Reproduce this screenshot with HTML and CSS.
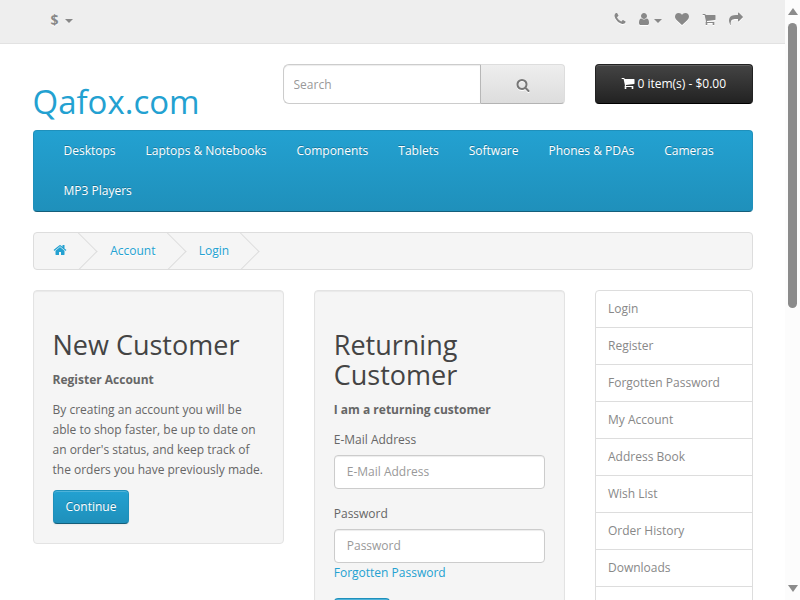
FILE: index.html
```html
<!DOCTYPE html>
<html lang="en">
<head>
<meta charset="utf-8">
<title>Account Login</title>
<link rel="stylesheet" href="styles.css">
</head>
<body>
<svg class="defs" width="0" height="0">
  <symbol id="phone" viewBox="0 0 1792 1792"><path d="M1600 1240q0 27-10 70.5t-21 68.5q-21 50-122 106-94 51-186 51-27 0-53-3.500t-57.500-12.500-47-14.500-55.500-20.500-49-18q-98-35-175-83-127-79-264-216t-216-264q-48-77-83-175-3-9-18-49t-20.500-55.500-14.500-47-12.500-57.500-3.500-53q0-92 51-186 56-101 106-122 25-11 68.500-21t70.500-10q14 0 21 3 18 6 53 76 11 19 30 54t35 63.500 31 53.500q3 4 17.500 25t21.500 35.500 7 28.500q0 20-28.500 50t-62 55-62 53-28.500 46q0 9 5 22.500t8.500 20.500 14 24 11.500 19q76 137 174 235t235 174q2 1 19 11.500t24 14 20.500 8.500 22.500 5q18 0 46-28.500t53-62 55-62 50-28.500q14 0 28.500 7t35.500 21.500 25 17.500q25 15 53.500 31t63.500 35 54 30q70 35 76 53 3 7 3 21z"/></symbol>
  <symbol id="user" viewBox="0 0 1792 1792"><path d="M1536 1399q0 109-62.500 187t-150.500 78h-854q-88 0-150.500-78t-62.500-187q0-85 8.500-160.500t31.500-152 58.500-131 94-89 134.500-34.500q131 128 313 128t313-128q76 0 134.500 34.500t94 89 58.500 131 31.500 152 8.500 160.500zm-256-887q0 159-112.500 271.500t-271.500 112.500-271.500-112.500-112.500-271.500 112.500-271.500 271.500-112.500 271.500 112.500 112.500 271.500z"/></symbol>
  <symbol id="heart" viewBox="0 0 1792 1792"><path d="M896 1664q-26 0-44-18l-624-602q-10-8-27.500-26t-55.500-65.500-68-97.500-53.500-121-23.500-138q0-220 127-344t351-124q62 0 126.500 21.500t120 58 95.500 68.500 76 68q36-36 76-68t95.500-68.500 120-58 126.500-21.500q224 0 351 124t127 344q0 221-229 450l-623 600q-18 18-44 18z"/></symbol>
  <symbol id="cart" viewBox="0 0 1792 1792"><path d="M704 1536q0 52-38 90t-90 38-90-38-38-90 38-90 90-38 90 38 38 90zm896 0q0 52-38 90t-90 38-90-38-38-90 38-90 90-38 90 38 38 90zm128-1088v512q0 24-16.500 42.500t-40.500 21.500l-1044 122q13 60 13 70 0 16-24 64h920q26 0 45 19t19 45-19 45-45 19h-1024q-26 0-45-19t-19-45q0-11 8-31.500t16-36 21.500-40 15.500-29.500l-177-823h-204q-26 0-45-19t-19-45 19-45 45-19h256q16 0 28.500 6.500t19.500 15.500 13 24.500 8 26 5.500 29.500 4.500 26h1201q26 0 45 19t19 45z"/></symbol>
  <symbol id="share" viewBox="0 0 1792 1792"><path d="M1792 640q0 26-19 45l-512 512q-19 19-45 19t-45-19-19-45v-256h-224q-98 0-175.500 6t-154 21.500-133 42.500-105.500 69.500-80 101-48.500 138.500-17.500 181q0 55 5 123 0 6 2.500 23.500t2.500 26.500q0 15-8.500 25t-23.500 10q-16 0-28-17-7-9-13-22t-13.500-30-10.500-24q-127-285-127-451 0-199 53-333 162-403 875-403h224v-256q0-26 19-45t45-19 45 19l512 512q19 19 19 45z"/></symbol>
  <symbol id="search" viewBox="0 0 1792 1792"><path d="M1216 832q0-185-131.500-316.500t-316.500-131.500-316.500 131.500-131.500 316.500 131.500 316.500 316.500 131.500 316.500-131.500 131.500-316.500zm512 832q0 52-38 90t-90 38q-54 0-90-38l-343-342q-179 124-399 124-143 0-273.500-55.500t-225-150-150-225-55.500-273.500 55.500-273.500 150-225 225-150 273.500-55.500 273.500 55.500 225 150 150 225 55.500 273.500q0 220-124 399l343 343q37 37 37 90z"/></symbol>
  <symbol id="home" viewBox="0 0 1792 1792"><path d="M1472 992v480q0 26-19 45t-45 19h-384v-384h-256v384h-384q-26 0-45-19t-19-45v-480q0-1 .5-3t.5-3l575-474 575 474q1 2 1 6zm223-69l-62 74q-8 9-21 11h-3q-13 0-21-7l-692-577-692 577q-12 8-24 7-13-2-21-11l-62-74q-8-10-7-23.500t11-21.500l719-599q32-26 76-26t76 26l244 204v-195q0-14 9-23t23-9h192q14 0 23 9t9 23v408l219 182q10 8 11 21.500t-7 23.500z"/></symbol>
</svg>
<div class="page">
  <nav class="top">
    <div class="container top-row">
      <div class="currency"><strong>$</strong><span class="caret"></span></div>
      <div class="top-links">
        <svg class="icon"><use href="#phone"/></svg>
        <span class="account"><svg class="icon"><use href="#user"/></svg><span class="caret"></span></span>
        <svg class="icon"><use href="#heart"/></svg>
        <svg class="icon"><use href="#cart"/></svg>
        <svg class="icon"><use href="#share"/></svg>
      </div>
    </div>
  </nav>
  <header class="container header">
    <h1 class="logo">Qafox.com</h1>
    <div class="search">
      <input type="text" placeholder="Search">
      <button type="button"><svg class="icon"><use href="#search"/></svg></button>
    </div>
    <button class="cart" type="button"><svg class="icon"><use href="#cart"/></svg><span>0 item(s) - $0.00</span></button>
  </header>
  <div class="container">
    <nav class="menu">
      <a>Desktops</a><a>Laptops &amp; Notebooks</a><a>Components</a><a>Tablets</a><a>Software</a><a>Phones &amp; PDAs</a><a>Cameras</a><a>MP3 Players</a>
    </nav>
    <ul class="breadcrumb">
      <li><svg class="icon"><use href="#home"/></svg></li>
      <li>Account</li>
      <li>Login</li>
    </ul>
    <div class="columns">
      <section class="well">
        <h2>New Customer</h2>
        <p><strong>Register Account</strong></p>
        <p>By creating an account you will be able to shop faster, be up to date on an order's status, and keep track of the orders you have previously made.</p>
        <button class="btn" type="button">Continue</button>
      </section>
      <section class="well">
        <h2>Returning Customer</h2>
        <p><strong>I am a returning customer</strong></p>
        <div class="group">
          <label for="email">E-Mail Address</label>
          <input id="email" type="text" placeholder="E-Mail Address">
        </div>
        <div class="group">
          <label for="password">Password</label>
          <input id="password" type="password" placeholder="Password">
          <a class="forgot">Forgotten Password</a>
        </div>
        <button class="btn submit" type="button"></button>
      </section>
      <aside class="list">
        <a>Login</a><a>Register</a><a>Forgotten Password</a><a>My Account</a><a>Address Book</a><a>Wish List</a><a>Order History</a><a>Downloads</a><a class="blank"></a>
      </aside>
    </div>
  </div>
</div>
<div class="scrollbar">
  <span class="arrow up"></span>
  <span class="thumb"></span>
  <span class="arrow down"></span>
</div>
</body>
</html>
```
FILE: styles.css
```css
* { box-sizing: border-box; }
body {
  margin: 0;
  height: 600px;
  display: flex;
  overflow: hidden;
  background: #fff;
  color: #666;
  font: 400 12px/20px "Open Sans", sans-serif;
}
input, button { font: inherit; }
.defs { position: absolute; }
.page { width: 785px; height: 600px; overflow: hidden; }
.container { width: 750px; margin: 0 auto; padding: 0 15px; }
.icon { display: block; flex: none; width: 14px; height: 14px; fill: currentColor; overflow: visible; }
.caret {
  display: inline-block;
  border-top: 4px solid;
  border-left: 4px solid transparent;
  border-right: 4px solid transparent;
}

.top { height: 44px; margin-bottom: 20px; background: #eee; border-bottom: 1px solid #e2e2e2; color: #888; }
.top-row { display: flex; justify-content: space-between; align-items: center; height: 40px; }
.currency { display: flex; align-items: center; gap: 6px; padding-left: 18px; font-size: 14px; text-shadow: 0 1px 0 #fff; }
.currency .caret { margin-top: 2px; }
.top-links { display: flex; align-items: center; gap: 13px; padding-right: 9.5px; margin-top: -2px; }
.top-links .icon { filter: drop-shadow(0 1px 0 #fff); }
.account { display: flex; align-items: center; gap: 3px; margin-left: -3px; }
.account .caret { margin-top: 4px; }

.header { display: flex; height: 66px; }
.logo { width: 250px; margin: 20px 0 0; color: #23a1d1; font-size: 33px; font-weight: 400; line-height: 36px; }
.search { display: flex; width: 282.5px; height: 40px; margin-right: 30px; }
.search input {
  flex: 1;
  min-width: 0;
  padding: 2px 10px 0;
  border: 1px solid #ccc;
  border-right: 0;
  border-radius: 6px 0 0 6px;
  box-shadow: inset 0 1px 1px rgba(0, 0, 0, .075);
}
::placeholder { color: #999; opacity: 1; }
.search button {
  display: flex;
  align-items: center;
  justify-content: center;
  width: 85px;
  padding: 2px 0 0;
  color: #777;
  background: linear-gradient(#eee, #ddd);
  border: 1px solid #ddd;
  border-color: #ddd #ddd #b3b3b3 #b7b7b7;
  border-radius: 0 4px 4px 0;
}
.search .icon { filter: drop-shadow(0 1px 0 #fff); }
.cart {
  display: flex;
  align-items: center;
  justify-content: center;
  gap: 2px;
  width: 157.5px;
  height: 40px;
  padding: 0;
  color: #fff;
  background: linear-gradient(#444, #222);
  border: 1px solid #111;
  border-color: #222 #222 #000;
  border-radius: 4px;
  box-shadow: inset 0 1px 0 rgba(255, 255, 255, .15);
}
.cart .icon { margin-top: -2px; }

.menu {
  display: flex;
  flex-wrap: wrap;
  height: 82px;
  margin-bottom: 20px;
  padding: 0 15px;
  background: linear-gradient(#23a1d1, #1f90bb);
  border: 1px solid #1f90bb;
  border-bottom-color: #145e7a;
  border-radius: 4px;
}
.menu a { height: 40px; padding: 10px 15px; color: #fff; text-shadow: 0 -1px 0 rgba(0, 0, 0, .25); }

.breadcrumb {
  display: flex;
  gap: 3.2px;
  height: 38px;
  margin: 0 0 20px;
  padding: 8px 0;
  overflow: hidden;
  list-style: none;
  color: #23a1d1;
  background: #f5f5f5;
  border: 1px solid #ddd;
  border-radius: 4px;
}
.breadcrumb li { position: relative; padding: 0 20px; text-shadow: 0 1px 0 #fff; }
.breadcrumb .icon { margin: 1.5px 0 0 -.5px; }
.breadcrumb li::after {
  content: "";
  position: absolute;
  top: -3px;
  right: -5px;
  width: 26px;
  height: 26px;
  border-top: 1px solid #ddd;
  border-right: 1px solid #ddd;
  transform: rotate(45deg);
}

.columns { display: grid; grid-template-columns: 251.25px 251.25px 157.5px; gap: 30px; align-items: start; }
.well { padding: 19px; background: #f5f5f5; border: 1px solid #e3e3e3; border-radius: 4px; box-shadow: inset 0 1px 1px rgba(0, 0, 0, .05); }
h2 { margin: 20px 0 10px; color: #444; font-size: 27px; font-weight: 400; line-height: 30px; }
p { margin: 0 0 10px; }
.btn {
  display: block;
  height: 34px;
  padding: 0 12px;
  color: #fff;
  background: linear-gradient(#23a1d1, #1f90bb);
  border: 1px solid #1f90bb;
  border-bottom-color: #145e7a;
  border-radius: 4px;
  box-shadow: inset 0 1px 0 rgba(255, 255, 255, .2), 0 1px 2px rgba(0, 0, 0, .05);
  text-shadow: 0 -1px 0 rgba(0, 0, 0, .25);
}
.submit { width: 56px; }
.group { margin-bottom: 15px; }
.group label { display: block; margin-bottom: 5px; }
.group input {
  display: block;
  width: 100%;
  height: 34px;
  padding: 0 12px 2px;
  border: 1px solid #ccc;
  border-radius: 4px;
  background: #fff;
  box-shadow: inset 0 1px 1px rgba(0, 0, 0, .075);
}
.forgot { display: block; color: #23a1d1; }
.list { border: 1px solid #ddd; border-radius: 4px; }
.list a { display: block; padding: 8px 12px; color: #888; }
.list a + a { border-top: 1px solid #ddd; }
.list .blank { height: 37px; }

.scrollbar { display: flex; flex-direction: column; align-items: center; width: 15px; height: 600px; padding: 8px 0; background: #fcfcfc; }
.arrow { border: 5px solid transparent; }
.up { border-top: 0; border-bottom: 7px solid #8b8b8b; margin-bottom: 8px; }
.down { border-bottom: 0; border-top: 7px solid #8b8b8b; margin-top: auto; }
.thumb { width: 9px; height: 285px; border-radius: 5px; background: #8b8b8b; }
```
